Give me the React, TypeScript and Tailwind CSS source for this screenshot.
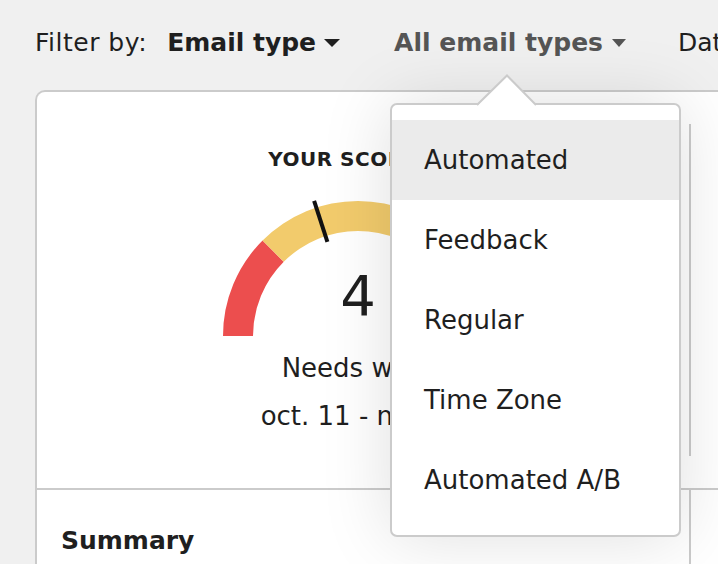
import React from "react";

const font = { fontFamily: '"DejaVu Sans", "Noto Sans", Arial, sans-serif' };

function Caret({ className, w = 16 }: { className: string; w?: number }) {
  return (
    <svg width={w} height="8" viewBox="0 0 16 8" preserveAspectRatio="none" className={className}>
      <path d="M0 0h16L8 8z" fill="currentColor" />
    </svg>
  );
}

function Gauge() {
  const cx = 145;
  const cy = 140;
  const ro = 135;
  const ri = 105;
  const pt = (r: number, deg: number) => {
    const a = (deg * Math.PI) / 180;
    return [cx + r * Math.cos(a), cy - r * Math.sin(a)];
  };
  const seg = (from: number, to: number) => {
    const [x1, y1] = pt(ro, from);
    const [x2, y2] = pt(ro, to);
    const [x3, y3] = pt(ri, to);
    const [x4, y4] = pt(ri, from);
    return `M${x1} ${y1} A${ro} ${ro} 0 0 1 ${x2} ${y2} L${x3} ${y3} A${ri} ${ri} 0 0 0 ${x4} ${y4}Z`;
  };
  const [t1x, t1y] = pt(142, 108);
  const [t2x, t2y] = pt(99, 108);
  return (
    <svg width="290" height="140" viewBox="0 0 290 140">
      <path d={seg(180, 135)} fill="#ec4e4e" />
      <path d={seg(135, 45)} fill="#f2cb6c" />
      <path d={seg(45, 0)} fill="#3fbf7f" />
      <line x1={t1x} y1={t1y} x2={t2x} y2={t2y} stroke="#111" strokeWidth="4" />
    </svg>
  );
}

const items = ["Automated", "Feedback", "Regular", "Time Zone", "Automated A/B"];

export default function App() {
  return (
    <div className="relative h-[564px] w-[718px] overflow-hidden bg-[#f0f0f0] text-[#1f1f1f]" style={font}>
      <div className="flex h-[90px] items-center gap-[20px] pl-[35px] pb-[4px] text-[25px] whitespace-nowrap">
        <span className="tracking-[0.5px]">Filter by:</span>
        <button className="flex items-center gap-[8px] font-bold">
          Email type <Caret className="text-[#1f1f1f]" />
        </button>
        <button className="ml-[34px] flex items-center gap-[9px] font-bold text-[#555]">
          All email types <Caret className="text-[#555]" w={14} />
        </button>
        <span className="ml-[32px]">Date range</span>
      </div>

      <div className="ml-[35px] w-[900px] rounded-tl-[10px] border-t-2 border-l-2 border-[#cbcbcb] bg-white">
        <div className="flex h-[396px]">
          <div className="flex w-[642px] flex-col items-center pt-[52px]">
            <div className="flex items-center gap-[8px]">
              <span className="text-[20px] font-bold tracking-[0.5px]">YOUR SCORE</span>
              <svg width="22" height="22" viewBox="0 0 22 22">
                <circle cx="11" cy="11" r="9.5" fill="none" stroke="#1f1f1f" strokeWidth="2" />
                <path d="M11 9.5v6M11 6v1.5" stroke="#1f1f1f" strokeWidth="2" />
              </svg>
            </div>
            <div className="relative mt-[22px]">
              <Gauge />
              <div className="absolute inset-x-0 bottom-[12px] text-center text-[56px] leading-none">4</div>
            </div>
            <div className="mt-[13px] text-[26px]">Needs work</div>
            <div className="mt-[9px] text-[26px]">oct. 11 - nov. 9</div>
          </div>
          <div className="my-[32px] ml-[10px] w-[2px] bg-[#cbcbcb]" />
        </div>
        <div className="flex border-t-2 border-[#cbcbcb]">
          <div className="h-[80px] w-[652px] pl-[24px] pt-[32px] text-[25px] font-bold">Summary</div>
          <div className="w-[2px] bg-[#cbcbcb]" />
        </div>
      </div>

      <div className="absolute left-[390px] top-[103px] w-[291px] rounded-[7px] border-2 border-[#cbcbcb] bg-white py-[15px] shadow-[0_0_70px_rgba(0,0,0,0.13)]">
        <svg className="absolute left-[85px] top-[-31px]" width="60" height="33" viewBox="0 0 60 33">
          <path d="M0 32 L30 1 L60 32 Z" fill="white" />
          <path d="M0 31 L30 1.5 L59 31" fill="none" stroke="#cbcbcb" strokeWidth="2" />
        </svg>
        {items.map((t, i) => (
          <div
            key={t}
            className={`flex h-[80px] items-center pl-[32px] text-[26px] ${i === 0 ? "bg-[#ebebeb]" : ""}`}
          >
            {t}
          </div>
        ))}
      </div>
    </div>
  );
}
